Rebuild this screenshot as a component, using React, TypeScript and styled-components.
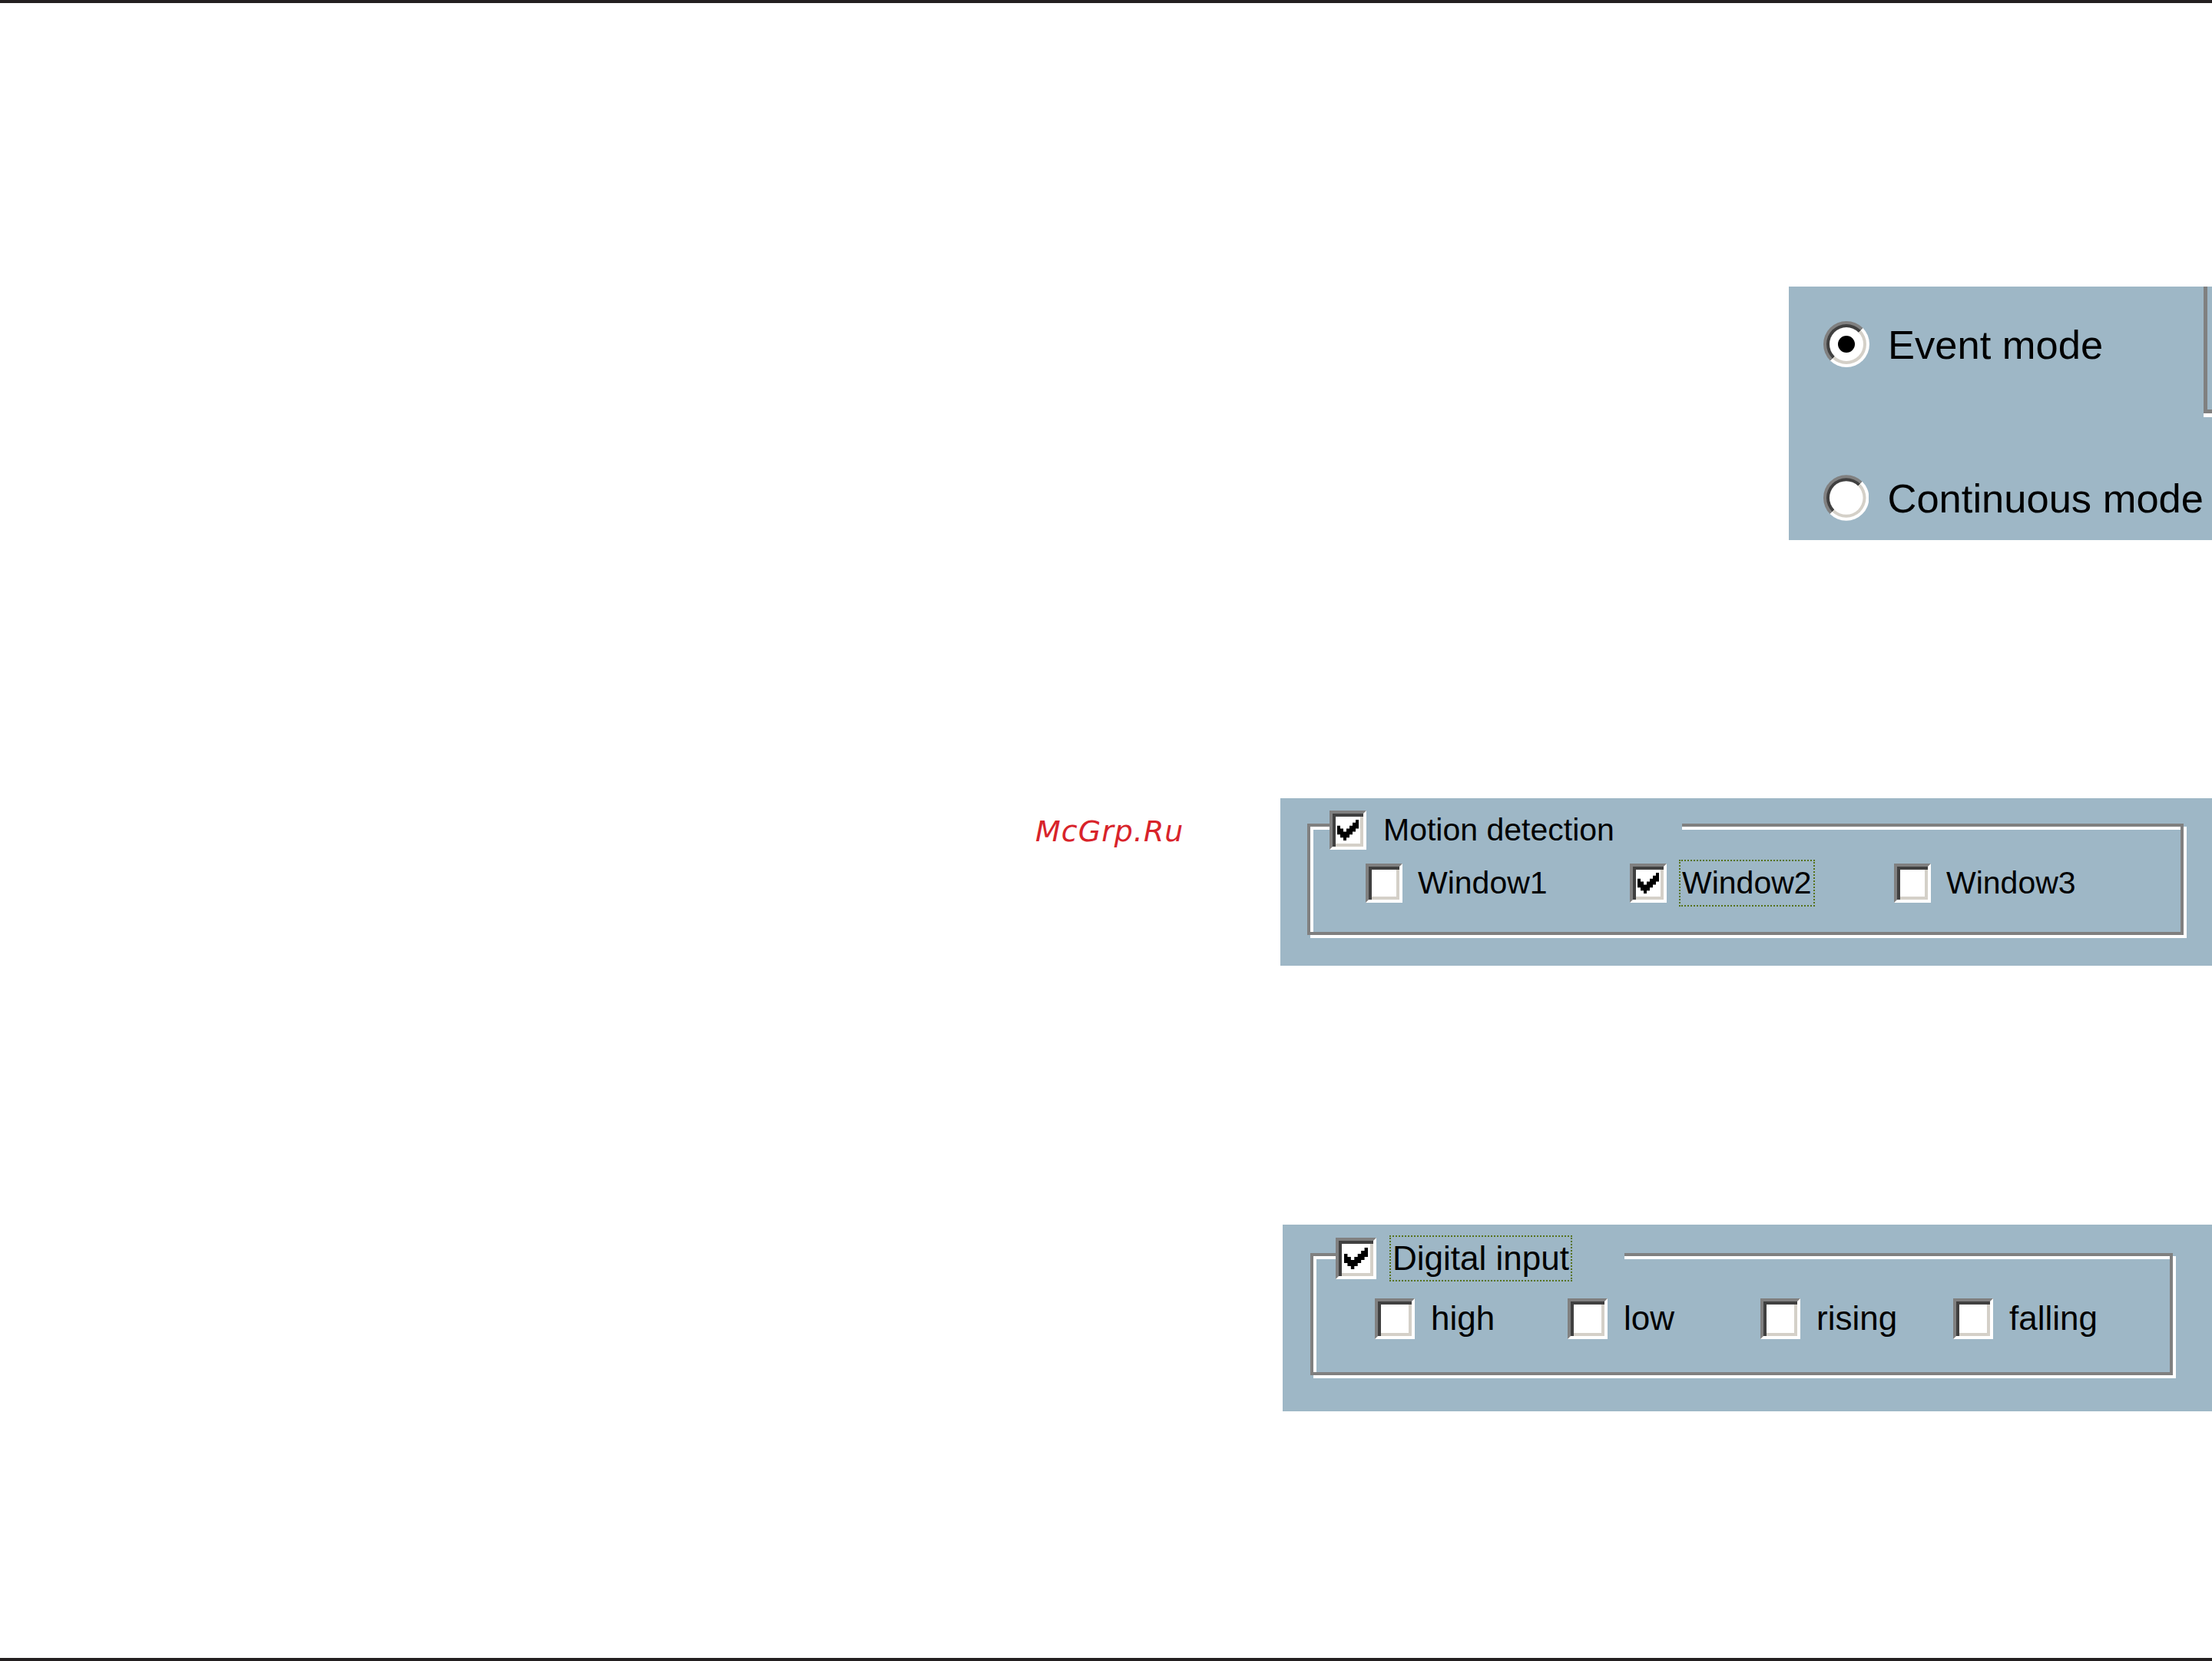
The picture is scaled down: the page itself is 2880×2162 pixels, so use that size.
import styled, { createGlobalStyle } from "styled-components";

const panelBlue = "#9eb7c6";

const GlobalStyle = createGlobalStyle`
  html, body {
    margin: 0;
    padding: 0;
    background: #ffffff;
  }
  body {
    font-family: "Liberation Sans", Arial, sans-serif;
    color: #000000;
  }
`;

const Page = styled.div`
  display: flex;
  flex-direction: column;
  width: 2880px;
  height: 2162px;
  box-sizing: border-box;
  border-top: 4px solid #231f20;
  border-bottom: 4px solid #231f20;
  padding-top: 369px;
  overflow: hidden;
`;

// ---- recording mode panel (top right) ----

const ModePanel = styled.div`
  align-self: flex-end;
  display: flex;
  width: 551px;
  height: 330px;
  background: ${panelBlue};
`;

const RadioColumn = styled.div`
  display: flex;
  flex-direction: column;
  gap: 140px;
  width: 540px;
  box-sizing: border-box;
  padding: 45px 0 0 45px;
`;

const RadioRow = styled.div`
  display: flex;
  align-items: center;
  gap: 24px;
  height: 60px;
`;

const RadioLabel = styled.span`
  font-size: 52.5px;
  white-space: nowrap;
`;

const EdgeFrame = styled.div`
  width: 11px;
  height: 165px;
  box-sizing: border-box;
  border-left: 5px solid #808080;
  border-bottom: 5px solid #808080;
  box-shadow: 0 5px 0 #ffffff;
`;

const RadioIcon = ({ checked }: { checked: boolean }) => (
  <svg width="60" height="60" viewBox="0 0 60 60">
    <defs>
      <linearGradient id="radioOuter" x1="0" y1="0" x2="1" y2="1">
        <stop offset="0.5" stopColor="#808080" />
        <stop offset="0.5" stopColor="#ffffff" />
      </linearGradient>
      <linearGradient id="radioInner" x1="0" y1="0" x2="1" y2="1">
        <stop offset="0.5" stopColor="#404040" />
        <stop offset="0.5" stopColor="#d4d0c8" />
      </linearGradient>
    </defs>
    <circle cx="30" cy="30" r="30" fill="url(#radioOuter)" />
    <circle cx="30" cy="30" r="26" fill="url(#radioInner)" />
    <circle cx="30" cy="30" r="22" fill="#ffffff" />
    {checked && <circle cx="30" cy="30" r="11" fill="#000000" />}
  </svg>
);

// ---- trigger panels ----

const TriggerRow = styled.div`
  display: flex;
  align-items: flex-start;
  margin-top: 336px;
`;

const Watermark = styled.span`
  margin-left: 1348px;
  margin-top: 21px;
  font-family: "DejaVu Sans", sans-serif;
  font-style: italic;
  font-size: 38px;
  letter-spacing: 1px;
  color: #d8232a;
`;

const OptionsPanel = styled.div<{ $width: number; $height: number; $padTop: number; $padLeft: number; $gapTop?: number }>`
  align-self: flex-end;
  margin-left: auto;
  margin-top: ${(p) => p.$gapTop ?? 0}px;
  width: ${(p) => p.$width}px;
  height: ${(p) => p.$height}px;
  box-sizing: border-box;
  padding: ${(p) => p.$padTop}px 0 0 ${(p) => p.$padLeft}px;
  background: ${panelBlue};
`;

const GroupBox = styled.div<{ $width: number; $height: number }>`
  width: ${(p) => p.$width}px;
  height: ${(p) => p.$height}px;
  box-sizing: border-box;
  border: 4px solid #808080;
  box-shadow: inset 4px 4px 0 #ffffff, 4px 4px 0 #ffffff;
`;

const Legend = styled.div<{ $width: number; $height: number; $top: number; $left: number; $gap: number }>`
  display: flex;
  align-items: center;
  gap: ${(p) => p.$gap}px;
  width: ${(p) => p.$width}px;
  height: ${(p) => p.$height}px;
  margin: ${(p) => p.$top}px 0 0 ${(p) => p.$left}px;
  background: ${panelBlue};
`;

const OptionRow = styled.div<{ $top: number; $left: number }>`
  display: flex;
  margin: ${(p) => p.$top}px 0 0 ${(p) => p.$left}px;
`;

const OptionItem = styled.div<{ $width: number; $gap: number }>`
  display: flex;
  align-items: center;
  gap: ${(p) => p.$gap}px;
  width: ${(p) => p.$width}px;
`;

const Label = styled.span<{ $size: number; $focused?: boolean; $padY: number }>`
  font-size: ${(p) => p.$size}px;
  white-space: nowrap;
  padding: ${(p) => p.$padY}px 2px;
  border: 2px dotted ${(p) => (p.$focused ? "#56721c" : "transparent")};
`;

const Box = styled.div<{ $w: number; $h: number }>`
  display: flex;
  align-items: center;
  justify-content: center;
  flex: none;
  width: ${(p) => p.$w}px;
  height: ${(p) => p.$h}px;
  box-sizing: border-box;
  border: 4px solid;
  border-color: #808080 #ffffff #ffffff #808080;
  background: #ffffff;
  box-shadow: inset 4px 4px 0 #404040, inset -4px -4px 0 #d4d0c8;
`;

const CheckBox = ({ w, h, checked }: { w: number; h: number; checked?: boolean }) => (
  <Box $w={w} $h={h}>
    {checked && (
      <svg width={Math.round(w * 0.58)} height={Math.round(h * 0.52)} viewBox="0 0 7 7" preserveAspectRatio="none">
        <polygon
          fill="#000000"
          points="6,0 7,0 7,3 6,3 6,4 5,4 5,5 4,5 4,6 3,6 3,7 2,7 2,6 1,6 1,5 0,5 0,2 1,2 1,3 2,3 2,4 3,4 3,3 4,3 4,2 5,2 5,1 6,1"
        />
      </svg>
    )}
  </Box>
);

const windows = [
  { name: "Window1", checked: false },
  { name: "Window2", checked: true, focused: true },
  { name: "Window3", checked: false },
];

const edges = ["high", "low", "rising", "falling"];

const App = () => {
  return (
    <>
      <GlobalStyle />
      <Page>
        <ModePanel>
          <RadioColumn>
            <RadioRow>
              <RadioIcon checked />
              <RadioLabel>Event mode</RadioLabel>
            </RadioRow>
            <RadioRow>
              <RadioIcon checked={false} />
              <RadioLabel>Continuous mode</RadioLabel>
            </RadioRow>
          </RadioColumn>
          <EdgeFrame />
        </ModePanel>

        <TriggerRow>
          <Watermark>McGrp.Ru</Watermark>
          <OptionsPanel $width={1213} $height={218} $padTop={33} $padLeft={35}>
            <GroupBox $width={1141} $height={145}>
              <Legend $width={459} $height={51} $top={-21} $left={25} $gap={18}>
                <CheckBox w={48} h={51} checked />
                <Label $size={41} $padY={0}>Motion detection</Label>
              </Legend>
              <OptionRow $top={13} $left={72}>
                {windows.map((win) => (
                  <OptionItem key={win.name} $width={344} $gap={16}>
                    <CheckBox w={48} h={51} checked={win.checked} />
                    <Label $size={41} $padY={5} $focused={win.focused}>
                      {win.name}
                    </Label>
                  </OptionItem>
                ))}
              </OptionRow>
            </GroupBox>
          </OptionsPanel>
        </TriggerRow>

        <OptionsPanel $width={1210} $height={243} $padTop={37} $padLeft={36} $gapTop={337}>
          <GroupBox $width={1123} $height={159}>
            <Legend $width={376} $height={61} $top={-28} $left={29} $gap={17}>
              <CheckBox w={53} h={54} checked />
              <Label $size={44} $padY={3} $focused>
                Digital input
              </Label>
            </Legend>
            <OptionRow $top={18} $left={80}>
              {edges.map((edge) => (
                <OptionItem key={edge} $width={251} $gap={17}>
                  <CheckBox w={52} h={53} />
                  <Label $size={44} $padY={3}>
                    {edge}
                  </Label>
                </OptionItem>
              ))}
            </OptionRow>
          </GroupBox>
        </OptionsPanel>
      </Page>
    </>
  );
};

export default App;
